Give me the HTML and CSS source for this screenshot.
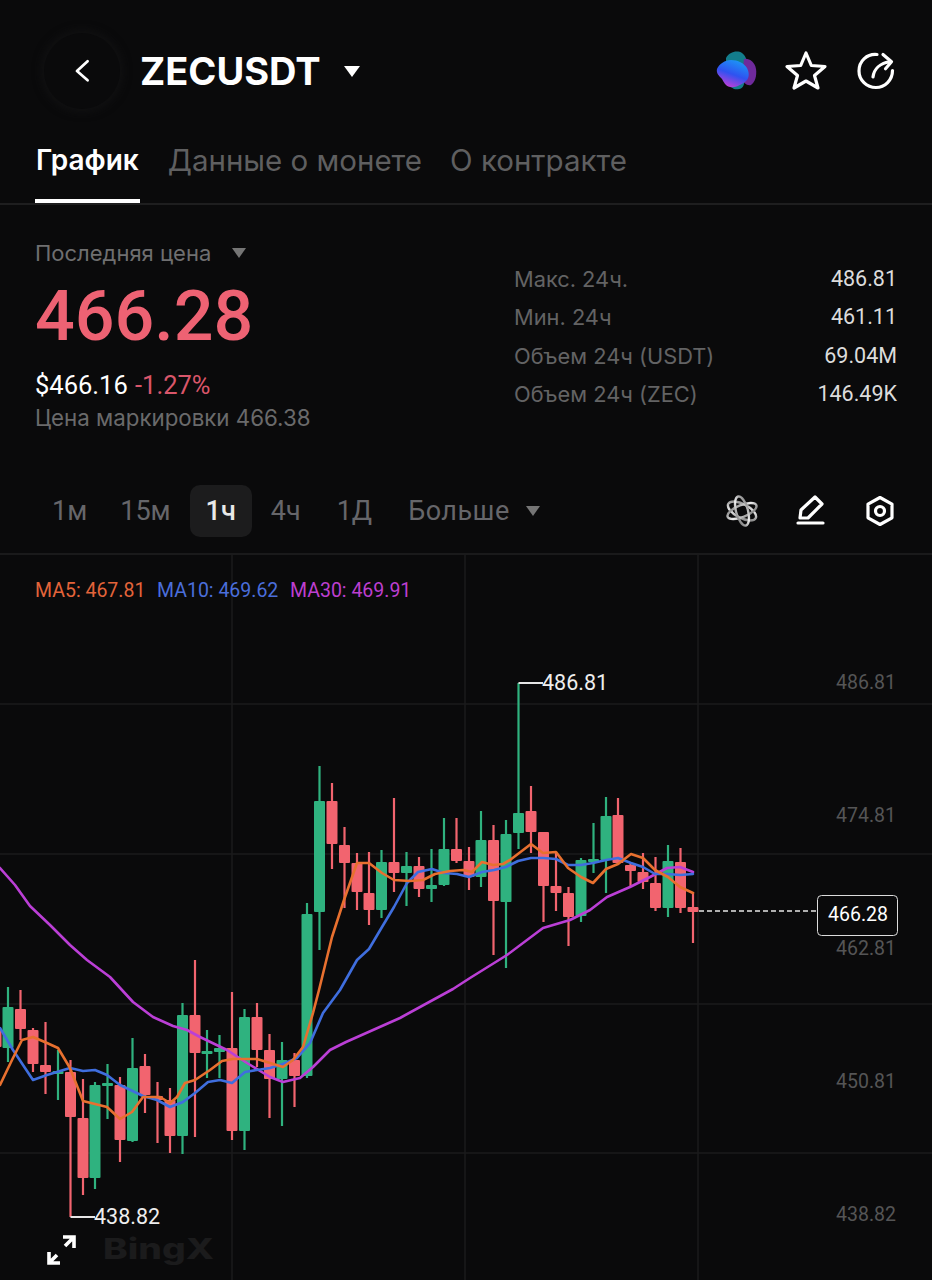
FILE: index.html
```html
<!DOCTYPE html>
<html lang="ru">
<head>
    <meta charset="UTF-8">
    <meta name="viewport" content="width=device-width, initial-scale=1.0">
    <title>ZECUSDT</title>
    <link rel="stylesheet" href="styles.css">
</head>
<body>
    <div class="header">
        <div class="back-btn">
            <svg width="20" height="30" viewBox="0 0 20 30"><path class="icon-line" d="M16 3.500 3.500 15 16 26"/></svg>
        </div>
        <div class="symbol">ZECUSDT</div>
        <div class="caret caret-white"></div>
        <div class="header-icons">
            <svg class="blob" width="42" height="42" viewBox="0 0 42 42">
                <defs>
                    <linearGradient id="blobMain" x1="0.8" y1="0" x2="0.35" y2="1">
                        <stop offset="0" stop-color="#1a9df7"/>
                        <stop offset="0.55" stop-color="#2f52f0"/>
                        <stop offset="1" stop-color="#c13fd8"/>
                    </linearGradient>
                </defs>
                <path fill="#137d8c" d="M10 8c3-6 11-8 16-5 4 3 5 8 6 12l-4 19c-1 5-6 6-10 5-4-2-6-6-8-10z"/>
                <path fill="#6f2a9c" d="M28 9c5-1 11 3 12 10 1 7-1 13-5 16-4 1-8-2-9-7z"/>
                <path fill="url(#blobMain)" d="M1 19c2-5 8-9 14-9 7 0 13 3 16 8 3 6 2 11-2 14-5 3-9 6-15 5-5-1-6-5-8-8-3-3-6-6-5-10z"/>
            </svg>
            <svg width="44" height="44" viewBox="0 0 44 44"><path class="icon-line" d="M22 4 27.300 16.500 41 17.500 30.500 26.500 34 39 22 32 10 39 13.500 26.500 3 17.500 16.700 16.500z"/></svg>
            <svg width="44" height="44" viewBox="0 0 44 44"><path class="icon-line" d="M23 5.500C13 4.500 5 12 5 22c0 9 7.500 16.500 17 16.500 9 0 16.500-7.500 16.500-17M19 28c1-8 7-14 17.500-15.500M29 5.500l8.500 7.300-6 7"/></svg>
        </div>
    </div>

    <div class="tabs">
        <div class="tab tab-active">График</div>
        <div class="tab">Данные о монете</div>
        <div class="tab">О контракте</div>
    </div>

    <div class="summary">
        <div class="price-box">
            <div class="price-label">Последняя цена <span class="caret caret-gray"></span></div>
            <div class="price-value">466.28</div>
            <div class="price-usd">$466.16 <span class="price-change">-1.27%</span></div>
            <div class="price-mark">Цена маркировки 466.38</div>
        </div>
        <div class="stats">
            <div class="stat-row"><span class="stat-label">Макс. 24ч.</span><span class="stat-value">486.81</span></div>
            <div class="stat-row"><span class="stat-label">Мин. 24ч</span><span class="stat-value">461.11</span></div>
            <div class="stat-row"><span class="stat-label">Объем 24ч (USDT)</span><span class="stat-value">69.04M</span></div>
            <div class="stat-row"><span class="stat-label">Объем 24ч (ZEC)</span><span class="stat-value">146.49K</span></div>
        </div>
    </div>

    <div class="toolbar">
        <div class="period">1м</div>
        <div class="period">15м</div>
        <div class="period period-active">1ч</div>
        <div class="period">4ч</div>
        <div class="period">1Д</div>
        <div class="period period-more">Больше <span class="caret caret-gray"></span></div>
        <div class="tools">
            <svg width="36" height="36" viewBox="0 0 36 36">
                <defs>
                    <linearGradient id="atomGrad" x1="0" y1="0" x2="1" y2="1">
                        <stop offset="0" stop-color="#777"/>
                        <stop offset="0.5" stop-color="#eee"/>
                        <stop offset="1" stop-color="#666"/>
                    </linearGradient>
                </defs>
                <g class="atom">
                    <ellipse cx="18" cy="18" rx="15.500" ry="7" transform="rotate(28 18 18)"/>
                    <ellipse cx="18" cy="18" rx="15.500" ry="6" transform="rotate(-22 18 18)"/>
                    <ellipse cx="18" cy="18" rx="15" ry="6" transform="rotate(75 18 18)"/>
                </g>
            </svg>
            <svg width="36" height="36" viewBox="0 0 36 36"><path class="icon-line" d="M7 25 8 17 22 4 29 11 15 25zM5 30H30"/></svg>
            <svg width="36" height="36" viewBox="0 0 36 36"><path class="icon-line" d="M18 4.500 30 11.200V24.800L18 31.500 6 24.800V11.200z"/><circle class="icon-line" cx="18" cy="18" r="4.500"/></svg>
        </div>
    </div>

    <div class="chart">
        <svg id="chart-svg" width="932" height="725" viewBox="0 555 932 725">
            <g class="grid">
                <path d="M0 704H932M0 854H932M0 1004H932M0 1153H932M232 555V1280M465 555V1280M698 555V1280"/>
            </g>

            <text class="legend" y="597">
                <tspan class="ma5" x="35">MA5: 467.81</tspan>
                <tspan class="ma10" x="157">MA10: 469.62</tspan>
                <tspan class="ma30" x="290">MA30: 469.91</tspan>
            </text>

            <text class="watermark" x="103" y="1259" textLength="111" lengthAdjust="spacingAndGlyphs">BingX</text>

            <g id="candles"></g>
            <g id="ma-lines"></g>

            <path class="callout" d="M518.500 683H543M70.500 1217H95"/>
            <text class="callout-text" x="542" y="690">486.81</text>
            <text class="callout-text" x="94" y="1224">438.82</text>

            <text class="axis" x="896" y="689">486.81</text>
            <text class="axis" x="896" y="822">474.81</text>
            <text class="axis" x="896" y="955">462.81</text>
            <text class="axis" x="896" y="1088">450.81</text>
            <text class="axis" x="896" y="1221">438.82</text>

            <path class="last-line" d="M699 911H817"/>
            <rect class="last-tag" x="817.500" y="895.500" width="80" height="40" rx="4"/>
            <text class="last-text" x="858" y="921">466.28</text>

            <path class="icon-line expand" d="M49 1263 57 1255M65 1246 74 1237M63 1237H74V1248M49 1252V1263H60"/>
        </svg>
    </div>

    <script src="chart.js"></script>
</body>
</html>
```
FILE: styles.css
```css
* {
    box-sizing: border-box;
}
html, body {
    margin: 0;
    height: 1280px;
    overflow: hidden;
}
body {
    font-family: Roboto, "Noto Sans", sans-serif;
    background-color: #0a0a0b;
    color: #fff;
    width: 932px;
}
.header {
    display: flex;
    align-items: center;
    height: 142px;
    padding-left: 44px;
    padding-right: 34px;
}
.back-btn {
    width: 76px;
    height: 76px;
    border-radius: 50%;
    background-color: #0a0a0b;
    box-shadow: 0 0 8px 3px #111112;
    display: flex;
    align-items: center;
    justify-content: center;
    margin-right: 20px;
}
.back-btn svg {
    width: 17px;
    height: 26px;
}
.symbol {
    font-family: Inter, Roboto, sans-serif;
    font-size: 38px;
    font-weight: 700;
}
.caret {
    display: inline-block;
    width: 0;
    height: 0;
    border-left: 8px solid transparent;
    border-right: 8px solid transparent;
    border-top: 11px solid #fff;
}
.caret-white {
    margin-left: 23px;
}
.caret-gray {
    border-left-width: 7px;
    border-right-width: 7px;
    border-top: 10px solid #757575;
    margin-left: 12px;
    vertical-align: 3px;
}
.header-icons {
    margin-left: auto;
    display: flex;
    align-items: center;
    gap: 26px;
}
.icon-line {
    fill: none;
    stroke: #fff;
    stroke-width: 3.200;
    stroke-linejoin: round;
    stroke-linecap: round;
}
.tabs {
    display: flex;
    gap: 28px;
    height: 63px;
    padding-left: 35px;
    border-bottom: 2px solid #1e1e1f;
}
.tab {
    font-family: Inter, Roboto, sans-serif;
    font-size: 29.500px;
    color: #5f5f60;
    height: 61px;
    line-height: 36px;
}
.tab-active {
    color: #fff;
    font-size: 28px;
    font-weight: 600;
    border-bottom: 4px solid #fff;
    padding-left: 1px;
    padding-right: 1px;
}
.summary {
    display: flex;
    height: 256px;
    padding: 34px 35px 0;
}
.price-box {
    width: 479px;
}
.price-label {
    font-family: Inter, Roboto, sans-serif;
    font-size: 22px;
    line-height: 28px;
    color: #6f6f70;
}
.price-label .caret {
    margin-left: 14px;
}
.price-value {
    font-size: 70px;
    font-weight: 500;
    line-height: 84px;
    color: #ee6273;
    margin-top: 7px;
}
.price-usd {
    font-size: 25.500px;
    line-height: 32px;
    margin-top: 11px;
}
.price-change {
    color: #d9566a;
    margin-left: 1px;
}
.price-mark {
    font-family: Inter, Roboto, sans-serif;
    font-size: 22.300px;
    line-height: 28px;
    color: #6a6a6b;
    margin-top: 3px;
}
.stats {
    flex: 1;
    padding-top: 21px;
}
.stat-row {
    display: flex;
    justify-content: space-between;
    height: 38.300px;
    line-height: 38px;
}
.stat-label {
    font-family: Inter, Roboto, sans-serif;
    font-size: 21.800px;
    color: #636364;
}
.stat-value {
    font-size: 21.500px;
    color: #dcdcdc;
}
.toolbar {
    display: flex;
    align-items: center;
    height: 94px;
    padding: 8px 34px 0 35px;
    border-bottom: 2px solid #1a1a1b;
}
.period {
    font-size: 27px;
    color: #66666a;
    height: 52px;
    line-height: 52px;
    padding: 0 17px;
    border-radius: 10px;
    margin-right: 2px;
}
.period:first-child {
    padding-right: 14px;
}
.period-active {
    background-color: #1c1c1d;
    color: #e8e8e8;
    font-weight: 500;
    padding: 0 16px;
}
.period-more {
    letter-spacing: 0.5px;
    padding-left: 17px;
}
.period-more .caret {
    vertical-align: 4px;
    margin-left: 9px;
}
.tools {
    margin-left: auto;
    display: flex;
    align-items: center;
    gap: 33px;
}
.atom ellipse {
    fill: none;
    stroke: url(#atomGrad);
    stroke-width: 2.400;
}
.chart {
    height: 725px;
}
.chart svg {
    display: block;
}
.grid path {
    fill: none;
    stroke: #1b1b1c;
    stroke-width: 1.500;
}
.legend {
    font-size: 19.500px;
}
.ma5 {
    fill: #e3643a;
}
.ma10 {
    fill: #4a6edb;
}
.ma30 {
    fill: #bd3fd0;
}
.watermark {
    font-family: Inter, Roboto, sans-serif;
    font-size: 28px;
    font-weight: 800;
    fill: #1b1b1c;
}
.candle-up {
    fill: #2fb27f;
    stroke: #2fb27f;
}
.candle-down {
    fill: #f2646f;
    stroke: #f2646f;
}
.wick {
    stroke-width: 2.200;
}
.body {
    stroke: none;
}
.ma-line {
    fill: none;
    stroke-width: 2.600;
    stroke-linejoin: round;
    stroke-linecap: round;
}
.line-ma5 {
    stroke: #e8702f;
}
.line-ma10 {
    stroke: #3f6ede;
}
.line-ma30 {
    stroke: #bb3fd6;
}
.callout {
    fill: none;
    stroke: #e6e6e6;
    stroke-width: 2;
}
.callout-text {
    font-size: 21.500px;
    fill: #eee;
}
.axis {
    font-size: 19.500px;
    fill: #555556;
    text-anchor: end;
}
.last-line {
    fill: none;
    stroke: #e6e6e6;
    stroke-width: 1.500;
    stroke-dasharray: 5 3;
}
.last-tag {
    fill: #0a0a0b;
    stroke: #dcdcdc;
    stroke-width: 1;
}
.last-text {
    font-size: 19.500px;
    fill: #fff;
    text-anchor: middle;
}
.expand {
    stroke-width: 3.600;
    stroke-linecap: butt;
    stroke-linejoin: miter;
}
```
FILE: chart.js
```js
// Candles: x, high, open/top of body, bottom of body, low, u = green / d = red
const candles = [
    [-4, 1015, 1030, 1047, 1060, 'd'],
    [8, 987, 1007, 1048, 1062, 'u'],
    [20.5, 990, 1009, 1029, 1040, 'd'],
    [33, 1028, 1030, 1064, 1072, 'd'],
    [45.5, 1022, 1065, 1072, 1094, 'd'],
    [58, 1050, 1071, 1073, 1100, 'u'],
    [70.5, 1060, 1072, 1117, 1217, 'd'],
    [83, 1079, 1118, 1178, 1195, 'd'],
    [95, 1082, 1085, 1178, 1189, 'u'],
    [107.5, 1064, 1083, 1085, 1119, 'u'],
    [120, 1077, 1085, 1140, 1162, 'd'],
    [132.5, 1038, 1068, 1141, 1142, 'u'],
    [145, 1054, 1066, 1095, 1113, 'd'],
    [157.5, 1082, 1096, 1100, 1143, 'd'],
    [170, 1088, 1100, 1136, 1153, 'd'],
    [182.5, 1003, 1015, 1136, 1154, 'u'],
    [195, 960, 1015, 1053, 1137, 'd'],
    [207, 1030, 1051, 1054, 1078, 'u'],
    [219.5, 1035, 1048, 1052, 1078, 'u'],
    [232, 992, 1048, 1131, 1140, 'd'],
    [244.5, 1009, 1017, 1131, 1150, 'u'],
    [257, 1003, 1017, 1050, 1067, 'd'],
    [269.5, 1034, 1050, 1079, 1118, 'd'],
    [282, 1042, 1060, 1079, 1126, 'u'],
    [294.5, 1053, 1060, 1076, 1107, 'd'],
    [307, 903, 914, 1076, 1078, 'u'],
    [319.5, 766, 801, 912, 950, 'u'],
    [332, 783, 801, 844, 869, 'd'],
    [344.5, 827, 845, 863, 908, 'd'],
    [357, 853, 863, 892, 910, 'd'],
    [369, 852, 893, 910, 925, 'd'],
    [381.5, 850, 862, 910, 918, 'u'],
    [394, 798, 862, 873, 892, 'd'],
    [406.5, 852, 866, 873, 906, 'u'],
    [419, 857, 866, 889, 897, 'd'],
    [431.5, 849, 885, 889, 902, 'u'],
    [444, 818, 849, 885, 886, 'u'],
    [456.5, 818, 849, 861, 863, 'd'],
    [469, 847, 861, 877, 890, 'd'],
    [481, 811, 840, 877, 887, 'u'],
    [493.5, 825, 840, 901, 955, 'd'],
    [506, 820, 834, 902, 968, 'u'],
    [518.5, 683, 813, 833, 849, 'u'],
    [531, 786, 811, 832, 853, 'd'],
    [543.5, 832, 832, 886, 922, 'd'],
    [556, 852, 886, 893, 911, 'd'],
    [568.5, 887, 893, 917, 946, 'd'],
    [581, 858, 860, 916, 922, 'u'],
    [593.5, 823, 859, 861, 873, 'u'],
    [606, 797, 816, 860, 893, 'u'],
    [618, 798, 815, 863, 865, 'd'],
    [630.5, 862, 865, 871, 887, 'd'],
    [643, 853, 872, 882, 889, 'd'],
    [655.5, 857, 883, 908, 911, 'd'],
    [668, 845, 861, 908, 917, 'u'],
    [680.5, 848, 862, 908, 913, 'd'],
    [693, 892, 907, 912, 943, 'd']
];

const maLines = {
    'line-ma30': '0,868 15,885 30,906 50,925 70,945 87,960 110,977 133,1002 153,1017 173,1026 187,1030 200,1037 227,1050 247,1063 270,1077 283,1082 300,1078 313,1067 330,1050 346,1042 400,1018 453,989 470,978 507,955 543,928 570,920 590,910 607,897 630,887 650,877 667,868 680,867 693,872',
    'line-ma10': '0,1028 13,1050 33,1080 47,1075 70,1068 83,1071 95,1070 107,1075 120,1085 143,1096 157,1100 170,1107 183,1102 195,1093 208,1082 220,1080 232,1083 245,1072 257,1070 270,1068 283,1064 297,1058 310,1043 323,1013 340,990 357,960 369,949 382,927 394,907 407,883 418,872 432,869 444,873 457,874 469,877 482,872 494,870 506,867 518,861 531,858 543,858 556,859 568,865 581,865 593,863 606,860 618,858 631,863 643,867 655,874 668,874 680,875 693,874',
    'line-ma5': '0,1085 12,1060 22,1040 33,1037 47,1043 58,1048 70,1068 83,1101 95,1104 107,1107 120,1119 132,1112 143,1097 160,1097 170,1103 177,1097 185,1083 195,1080 210,1070 222,1061 233,1059 257,1059 270,1063 283,1067 293,1060 303,1047 313,1013 319,990 332,937 344,900 357,863 369,863 382,873 394,880 410,881 423,880 435,874 450,871 463,870 472,872 482,862 493,865 503,864 510,860 531,844 543,853 556,852 568,868 581,877 593,883 606,869 618,864 631,854 643,858 655,870 668,877 680,887 693,893'
};

const SVG_NS = 'http://www.w3.org/2000/svg';

function addEl(parent, tag, attrs) {
    const el = document.createElementNS(SVG_NS, tag);
    for (const key in attrs) {
        el.setAttribute(key, attrs[key]);
    }
    parent.appendChild(el);
}

// Draw candles
const candleGroup = document.getElementById('candles');
candles.forEach(([x, high, top, bottom, low, dir]) => {
    const cls = dir === 'u' ? 'candle-up' : 'candle-down';
    addEl(candleGroup, 'line', { class: cls + ' wick', x1: x, x2: x, y1: high, y2: low });
    addEl(candleGroup, 'rect', {
        class: cls + ' body',
        x: x - 5.5,
        y: top,
        width: 11,
        height: Math.max(bottom - top, 3),
        rx: 1
    });
});

// Draw moving averages
const lineGroup = document.getElementById('ma-lines');
for (const cls in maLines) {
    addEl(lineGroup, 'polyline', { class: 'ma-line ' + cls, points: maLines[cls] });
}
```
